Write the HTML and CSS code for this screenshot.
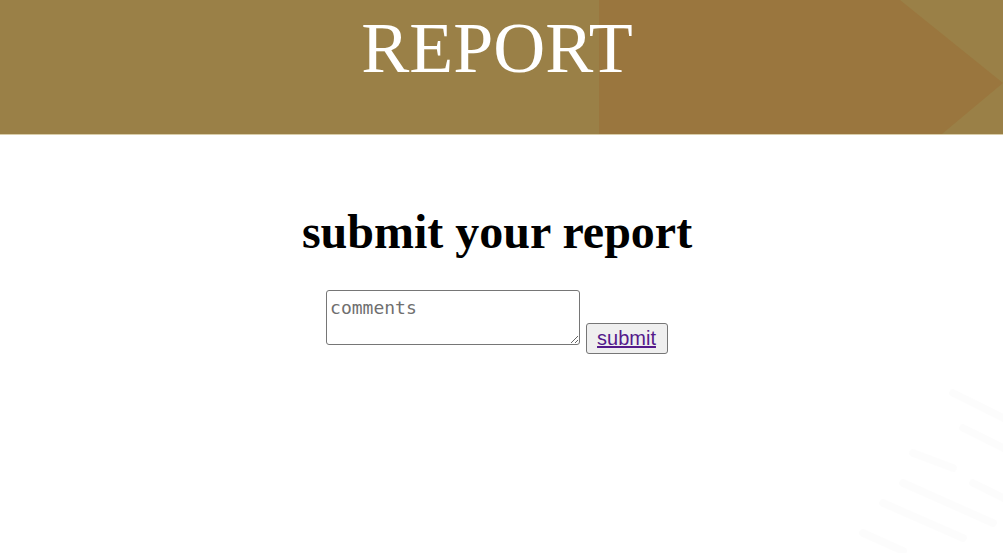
FILE: index.html
```html
<!DOCTYPE html>
<html lang="en">
<head>
<meta charset="utf-8">
<title>Report</title>
<link rel="stylesheet" href="styles.css">
</head>
<body>
<header class="banner">
  <div class="banner-arrow"></div>
  <div class="banner-title">REPORT</div>
</header>
<main class="content">
  <h1 class="heading">submit your report</h1>
  <form class="report-form" onsubmit="return false">
    <textarea class="comments" placeholder="comments"></textarea>
    <button class="submit-btn" type="button"><a class="submit-link" href="#">submit</a></button>
  </form>
</main>
<svg class="streaks" width="160" height="180" viewBox="0 0 160 180" aria-hidden="true">
  <g stroke="#000" stroke-opacity="0.01" stroke-width="8" stroke-linecap="round" fill="none">
    <path d="M110 20 L160 45"/>
    <path d="M120 55 L160 75"/>
    <path d="M70 80 L110 95"/>
    <path d="M130 110 L160 125"/>
    <path d="M60 110 L150 150"/>
    <path d="M40 130 L120 165"/>
    <path d="M20 160 L60 178"/>
  </g>
</svg>
</body>
</html>
```
FILE: styles.css
```css
html, body {
  margin: 0;
  padding: 0;
  background: #ffffff;
}

body {
  font-family: "Liberation Serif", "Times New Roman", serif;
  position: relative;
  min-height: 553px;
  overflow: hidden;
}

.banner {
  position: relative;
  height: 135px;
  box-sizing: border-box;
  padding: 12px 9px 0 0;
  background: #9a8047;
  border-bottom: 1px solid #d9cda9;
  display: flex;
  justify-content: center;
  overflow: hidden;
}

.banner-arrow {
  position: absolute;
  left: 599px;
  top: 0;
  width: 404px;
  height: 134px;
  background: #9a763e;
  clip-path: polygon(0 0, 301px 0, 404px 83px, 343px 134px, 0 134px);
}

.banner-title {
  position: relative;
  color: #ffffff;
  font-family: "Liberation Serif", "Times New Roman", serif;
  font-size: 72px;
  line-height: 72px;
  font-weight: normal;
}

.content {
  padding-right: 9px;
  text-align: center;
}

.heading {
  margin: 69px 0 0;
  font-family: "Liberation Serif", "Times New Roman", serif;
  font-size: 48px;
  font-weight: bold;
  color: #000000;
}

.report-form {
  margin: 31px 0 0;
  display: flex;
  justify-content: center;
  align-items: flex-end;
  gap: 6px;
}

.comments {
  box-sizing: border-box;
  width: 254px;
  height: 55px;
  margin: 0 0 9px;
  padding: 6px 3px 2px;
  border: 1px solid #767676;
  border-radius: 3px;
  font-family: "DejaVu Sans Mono", "Liberation Mono", monospace;
  font-size: 18px;
  color: #000;
  background: #fff;
}

.comments::placeholder {
  color: #6f6f6f;
}

.submit-btn {
  box-sizing: border-box;
  height: 31px;
  margin: 0;
  padding: 3px 11px 3px 10px;
  border: 1px solid #767676;
  border-radius: 3px;
  background: #efefef;
  font-family: "Liberation Sans", Arial, sans-serif;
  font-size: 20px;
  line-height: 23px;
}

.submit-link {
  color: #551a8b;
  text-decoration: underline;
}

.streaks {
  position: absolute;
  right: 0;
  bottom: 0;
}
```
